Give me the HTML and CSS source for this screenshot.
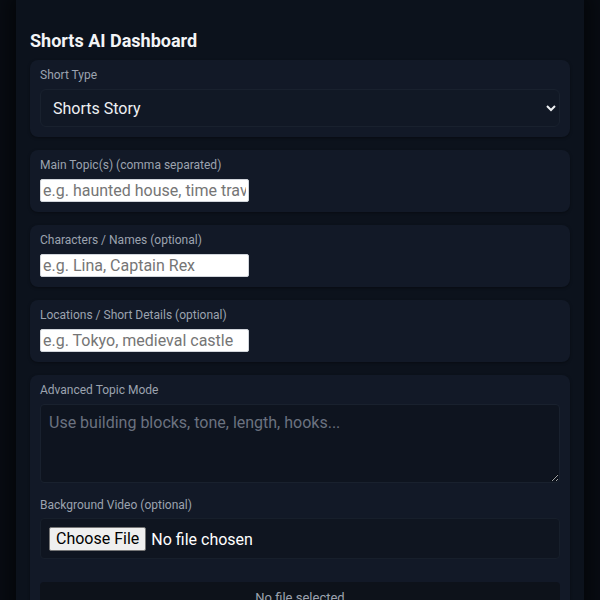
FILE: index.html
```html
<!DOCTYPE html>
<html lang="en">
<head>
<meta charset="utf-8">
<title>Shorts AI Dashboard</title>
<link rel="stylesheet" href="styles.css">
</head>
<body>
<main class="panel">
  <h1 class="title">Shorts AI Dashboard</h1>
  <section class="card card-select">
    <label class="label" for="type">Short Type</label>
    <select id="type" class="select">
      <option>Shorts Story</option>
    </select>
  </section>
  <section class="card">
    <label class="label" for="topics">Main Topic(s) (comma separated)</label>
    <input id="topics" class="text" type="text" placeholder="e.g. haunted house, time travel">
  </section>
  <section class="card">
    <label class="label" for="chars">Characters / Names (optional)</label>
    <input id="chars" class="text" type="text" placeholder="e.g. Lina, Captain Rex">
  </section>
  <section class="card">
    <label class="label" for="locs">Locations / Short Details (optional)</label>
    <input id="locs" class="text" type="text" placeholder="e.g. Tokyo, medieval castle">
  </section>
  <section class="card card-adv">
    <label class="label" for="adv">Advanced Topic Mode</label>
    <textarea id="adv" class="area" placeholder="Use building blocks, tone, length, hooks..."></textarea>
    <label class="label label-bg" for="video">Background Video (optional)</label>
    <div class="filebox">
      <input id="video" class="file" type="file">
    </div>
    <div class="status">No file selected</div>
  </section>
</main>
</body>
</html>
```
FILE: styles.css
```css
* {
  box-sizing: border-box;
}
html, body {
  margin: 0;
  padding: 0;
}
body {
  background: #080c13;
  font-family: Roboto, "Noto Sans", "Liberation Sans", sans-serif;
  color: #e5e7eb;
  height: 600px;
  overflow: hidden;
}
.panel {
  margin: 0 16px;
  padding: 30px 14px 40px;
  background: #0c121c;
  box-shadow: 0 0 18px 6px rgba(0, 0, 0, 0.55);
  display: flex;
  flex-direction: column;
  gap: 13px;
  min-height: 700px;
}
.title {
  margin: 0 0 -4px;
  font-size: 18px;
  line-height: 21px;
  font-weight: 700;
  color: #f3f4f6;
}
.card {
  background: #121927;
  border-radius: 8px;
  padding: 8px 10px 10px;
  display: flex;
  flex-direction: column;
  align-items: flex-start;
  box-shadow: 0 1px 3px rgba(0, 0, 0, 0.35);
}
.label {
  font-size: 12px;
  line-height: 14px;
  color: #9ca3af;
  margin-bottom: 7px;
}
.select {
  width: 100%;
  height: 38px;
  background: #111825;
  color: #eef0f3;
  border: 1px solid #19212e;
  border-radius: 6px;
  font-family: inherit;
  font-size: 16px;
  padding: 0 8px;
}
.text {
  width: 209px;
  height: 23px;
  background: #ffffff;
  border: 1px solid #d1d5db;
  border-radius: 2px;
  padding: 1px 2px;
  font-family: inherit;
  font-size: 16px;
  color: #111;
}
.text::placeholder {
  color: #757575;
}
.area {
  width: 100%;
  height: 79px;
  background: #0e141f;
  border: 1px solid #19212e;
  border-radius: 4px;
  padding: 8px;
  font-family: inherit;
  font-size: 16px;
  line-height: 19px;
  color: #e5e7eb;
  resize: vertical;
  margin-bottom: 15px;
}
.area::placeholder {
  color: #6b7280;
}
.label-bg {
  margin-bottom: 6px;
}
.filebox {
  width: 100%;
  height: 41px;
  border: 1px solid #171f2b;
  border-radius: 4px;
  background: #0f1520;
  padding: 8px;
  display: flex;
  align-items: center;
  margin-bottom: 23px;
}
.file {
  font-family: inherit;
  font-size: 16px;
  color: #ffffff;
}
.file::file-selector-button {
  font-family: inherit;
  font-size: 16px;
  color: #000;
  background: #efefef;
  border: 1px solid #767676;
  border-radius: 2px;
  padding: 1px 6px;
  margin-right: 5px;
  height: 24px;
}
.status {
  width: 100%;
  background: #0d121a;
  border-radius: 4px;
  text-align: center;
  font-size: 13px;
  color: #9ca3af;
  padding: 8px 0 30px;
}
```
